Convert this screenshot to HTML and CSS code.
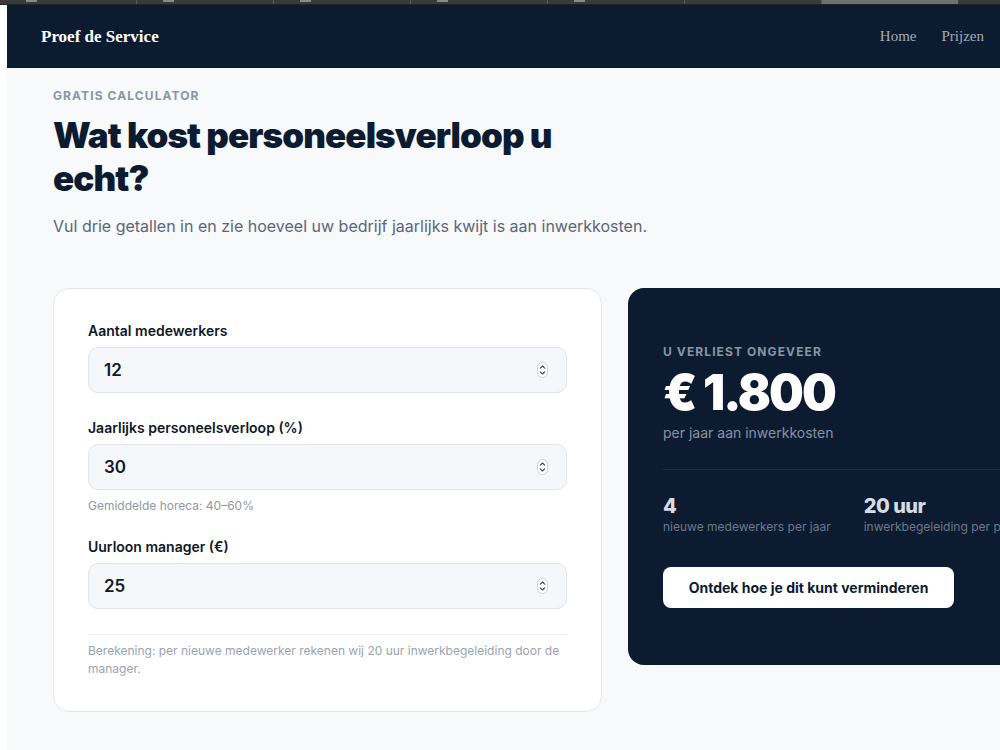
FILE: index.html
```html
<!DOCTYPE html>
<html lang="nl">
<head>
    <meta charset="UTF-8">
    <meta name="viewport" content="width=device-width, initial-scale=1.0">
    <title>Personeelsverloop calculator - Proef de Service</title>
    <link rel="stylesheet" href="styles.css">
</head>
<body>

    <div class="tabstrip">
        <span class="tab"><i></i></span>
        <span class="tab"><i></i></span>
        <span class="tab"><i></i></span>
        <span class="tab"><i></i></span>
        <span class="tab"><i></i></span>
        <span class="tab"></span>
        <span class="tab actief"></span>
    </div>

    <div class="pagina">
        <header class="kop">
            <a class="merk" href="#">Proef de Service</a>
            <nav class="menu">
                <a href="#">Home</a>
                <a href="#">Prijzen</a>
            </nav>
        </header>

        <main class="inhoud">
            <p class="bovenkop">Gratis calculator</p>
            <h1>Wat kost personeelsverloop u echt?</h1>
            <p class="intro">Vul drie getallen in en zie hoeveel uw bedrijf jaarlijks kwijt is aan inwerkkosten.</p>

            <section class="calculator">
                <form class="invoer" id="calcForm">
                    <label for="medewerkers">Aantal medewerkers</label>
                    <div class="veld">
                        <input type="text" id="medewerkers" value="12">
                        <svg class="spinner" width="11" height="16" viewBox="0 0 11 16">
                            <rect x="0.5" y="0.5" width="10" height="15" rx="5" fill="#fff" stroke="#c9ced6"/>
                            <path d="M3.3 6.2 5.5 4l2.2 2.2M3.3 9.8 5.5 12l2.2-2.2" fill="none" stroke="#3b4452" stroke-width="1.1" stroke-linecap="round" stroke-linejoin="round"/>
                        </svg>
                    </div>

                    <label for="verloop">Jaarlijks personeelsverloop (%)</label>
                    <div class="veld">
                        <input type="text" id="verloop" value="30">
                        <svg class="spinner" width="11" height="16" viewBox="0 0 11 16">
                            <rect x="0.5" y="0.5" width="10" height="15" rx="5" fill="#fff" stroke="#c9ced6"/>
                            <path d="M3.3 6.2 5.5 4l2.2 2.2M3.3 9.8 5.5 12l2.2-2.2" fill="none" stroke="#3b4452" stroke-width="1.1" stroke-linecap="round" stroke-linejoin="round"/>
                        </svg>
                    </div>
                    <p class="hint">Gemiddelde horeca: 40–60%</p>

                    <label for="uurloon">Uurloon manager (€)</label>
                    <div class="veld">
                        <input type="text" id="uurloon" value="25">
                        <svg class="spinner" width="11" height="16" viewBox="0 0 11 16">
                            <rect x="0.5" y="0.5" width="10" height="15" rx="5" fill="#fff" stroke="#c9ced6"/>
                            <path d="M3.3 6.2 5.5 4l2.2 2.2M3.3 9.8 5.5 12l2.2-2.2" fill="none" stroke="#3b4452" stroke-width="1.1" stroke-linecap="round" stroke-linejoin="round"/>
                        </svg>
                    </div>

                    <p class="uitleg">Berekening: per nieuwe medewerker rekenen wij 20 uur inwerkbegeleiding door de manager.</p>
                </form>

                <div class="resultaat">
                    <p class="bovenkop licht">U verliest ongeveer</p>
                    <p class="bedrag" id="bedrag">€ 1.800</p>
                    <p class="onder">per jaar aan inwerkkosten</p>

                    <div class="cijfers">
                        <div>
                            <strong id="nieuw">4</strong>
                            <span>nieuwe medewerkers per jaar</span>
                        </div>
                        <div>
                            <strong>20 uur</strong>
                            <span>inwerkbegeleiding per persoon</span>
                        </div>
                    </div>

                    <a class="knop" href="#">Ontdek hoe je dit kunt verminderen</a>
                </div>
            </section>
        </main>
    </div>

    <script>
        // Herbereken bij elke wijziging
        const velden = ["medewerkers", "verloop", "uurloon"].map(id => document.getElementById(id));

        function bereken() {
            const aantal = parseFloat(velden[0].value) || 0;
            const verloop = parseFloat(velden[1].value) || 0;
            const loon = parseFloat(velden[2].value) || 0;
            const nieuw = Math.round(aantal * verloop / 100);
            const kosten = nieuw * 20 * loon;
            document.getElementById("nieuw").textContent = nieuw;
            document.getElementById("bedrag").textContent = "€ " + kosten.toLocaleString("nl-NL");
        }

        velden.forEach(v => v.addEventListener("input", bereken));
    </script>

</body>
</html>
```

FILE: styles.css
```css
* {
    box-sizing: border-box;
}
body {
    margin: 0;
    background: #fff;
    font-family: Inter, "Noto Sans", Arial, sans-serif;
    color: #0d1b2e;
    overflow: hidden;
}
p {
    margin: 0;
}

/* browserbalk bovenaan */
.tabstrip {
    display: flex;
    height: 5px;
    background: #3a3a3a;
    border-bottom: 1px solid #222;
}
.tab {
    width: 137px;
    border-right: 1px solid #5a5a5a;
    position: relative;
}
.tab i {
    position: absolute;
    left: 26px;
    top: 0;
    width: 11px;
    height: 2px;
    background: #8a8a8a;
}
.tab.actief {
    background: #707070;
    border-right-color: #444;
}

.pagina {
    margin-left: 7px;
    background: #f7f9fb;
    min-height: 745px;
    min-width: 1200px;
}

/* kop */
.kop {
    height: 63px;
    background: #0c1b30;
    display: flex;
    align-items: center;
    justify-content: space-between;
    padding: 0 0 0 34px;
    width: 993px;
}
.merk {
    font-family: "Liberation Serif", "Times New Roman", serif;
    font-weight: bold;
    font-size: 17px;
    color: #fff;
    text-decoration: none;
}
.menu {
    display: flex;
    gap: 25px;
    padding-right: 16px;
}
.menu a {
    font-family: "Liberation Serif", "Times New Roman", serif;
    font-size: 15px;
    color: #a3abb8;
    text-decoration: none;
}

/* inhoud */
.inhoud {
    padding: 20px 0 40px 46px;
}
.bovenkop {
    font-size: 12px;
    font-weight: 700;
    letter-spacing: 1.1px;
    text-transform: uppercase;
    color: #8b95a3;
}
h1 {
    margin: 11px 0 0;
    width: 560px;
    font-size: 35px;
    line-height: 43px;
    font-weight: 900;
    letter-spacing: -0.9px;
    color: #0c1b30;
}
.intro {
    margin-top: 16px;
    font-size: 16px;
    color: #5b6678;
}

.calculator {
    margin-top: 52px;
    display: grid;
    grid-template-columns: 549px 549px;
    gap: 26px;
    align-items: start;
}

/* invoerkaart */
.invoer {
    background: #fff;
    border: 1px solid #e4e8ed;
    border-radius: 16px;
    padding: 32px 34px 33px;
}
.invoer label {
    display: block;
    font-size: 14px;
    font-weight: 600;
    line-height: 20px;
    color: #0f1726;
    margin-bottom: 6px;
}
.veld {
    display: flex;
    align-items: center;
    height: 46px;
    background: #f5f7fa;
    border: 1.5px solid #e1e5ea;
    border-radius: 10px;
    padding: 0 18px 0 15px;
    margin-bottom: 25px;
}
.veld input {
    flex: 1;
    border: none;
    background: transparent;
    font-family: inherit;
    font-size: 17px;
    font-weight: 600;
    color: #111a28;
    outline: none;
    padding: 0;
}
.hint {
    margin: -18px 0 22px;
    font-size: 12px;
    line-height: 18px;
    color: #8e97a6;
}
.uitleg {
    border-top: 1px solid #eceff3;
    padding-top: 7px;
    font-size: 12px;
    line-height: 18px;
    color: #9aa2b0;
}

/* resultaatkaart */
.resultaat {
    background: #0c1b30;
    border-radius: 16px;
    padding: 56px 35px 57px;
    color: #fff;
}
.licht {
    color: #8894a5;
}
.bedrag {
    margin-top: 5px;
    font-size: 49px;
    line-height: 58px;
    font-weight: 900;
    letter-spacing: -2px;
}
.onder {
    margin-top: 2px;
    font-size: 14px;
    color: #8693a5;
}
.cijfers {
    margin-top: 28px;
    border-top: 1px solid #1e2d43;
    padding-top: 23px;
    display: flex;
    gap: 33px;
}
.cijfers div {
    display: flex;
    flex-direction: column;
    white-space: nowrap;
}
.cijfers strong {
    font-size: 20px;
    line-height: 26px;
    font-weight: 800;
    letter-spacing: -0.5px;
    color: #d6dce4;
}
.cijfers span {
    font-size: 12px;
    line-height: 16px;
    color: #6b798c;
}
.knop {
    display: inline-block;
    margin-top: 32px;
    width: 291px;
    height: 41px;
    line-height: 41px;
    text-align: center;
    background: #fff;
    border-radius: 8px;
    font-size: 14px;
    font-weight: 700;
    color: #0c1b30;
    text-decoration: none;
}
```
